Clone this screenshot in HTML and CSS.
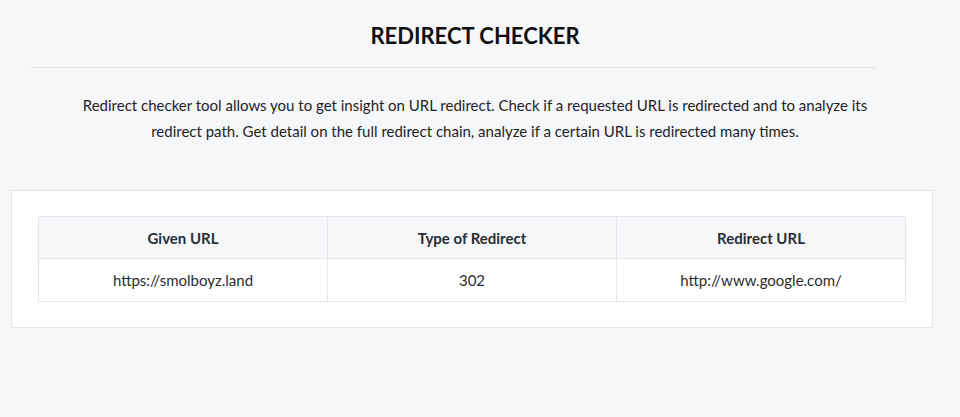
FILE: index.html
```html
<!DOCTYPE html>
<html lang="en">
<head>
    <meta charset="UTF-8">
    <meta name="viewport" content="width=device-width, initial-scale=1.0">
    <title>Redirect Checker</title>
    <link rel="stylesheet" href="styles.css">
</head>
<body>
    <div class="page-header">
        <h1 class="page-title">REDIRECT CHECKER</h1>
        <hr class="title-rule">
        <p class="intro">Redirect checker tool allows you to get insight on URL redirect. Check if a requested URL is redirected and to analyze its redirect path. Get detail on the full redirect chain, analyze if a certain URL is redirected many times.</p>
    </div>

    <div class="result-card">
        <table class="result-table">
            <thead>
                <tr>
                    <th>Given URL</th>
                    <th>Type of Redirect</th>
                    <th>Redirect URL</th>
                </tr>
            </thead>
            <tbody>
                <tr>
                    <td>https://smolboyz.land</td>
                    <td>302</td>
                    <td>http://www.google.com/</td>
                </tr>
            </tbody>
        </table>
    </div>
</body>
</html>
```

FILE: styles.css
```css
body {
    margin: 0;
    background-color: #f6f7f9;
    font-family: "Lato", "Noto Sans", sans-serif;
    color: #1f2229;
    font-size: 15px;
}

.page-header {
    padding: 23px 40px 0 30px;
}

.page-title {
    margin: 0;
    text-align: center;
    font-size: 22px;
    font-weight: 700;
    line-height: 26px;
    color: #111;
}

.title-rule {
    width: 95%;
    margin: 18px 0 0;
    border: none;
    border-top: 1px solid #e3e5e9;
}

.intro {
    margin: 24px 0 0;
    padding: 0 50px;
    text-align: center;
    line-height: 26px;
}

.result-card {
    margin: 46px 27px 0 11px;
    padding: 25px 26px;
    background-color: #fff;
    border: 1px solid #e3e6ec;
}

.result-table {
    width: 100%;
    border-collapse: collapse;
    table-layout: fixed;
}

.result-table th,
.result-table td {
    border: 1px solid #e3e6ec;
    text-align: center;
    padding: 0 10px;
}

.result-table th {
    height: 41px;
    background-color: #f6f7f9;
    font-weight: 700;
    color: #2a2d34;
}

.result-table td {
    height: 42px;
    color: #2a2d34;
}
```
